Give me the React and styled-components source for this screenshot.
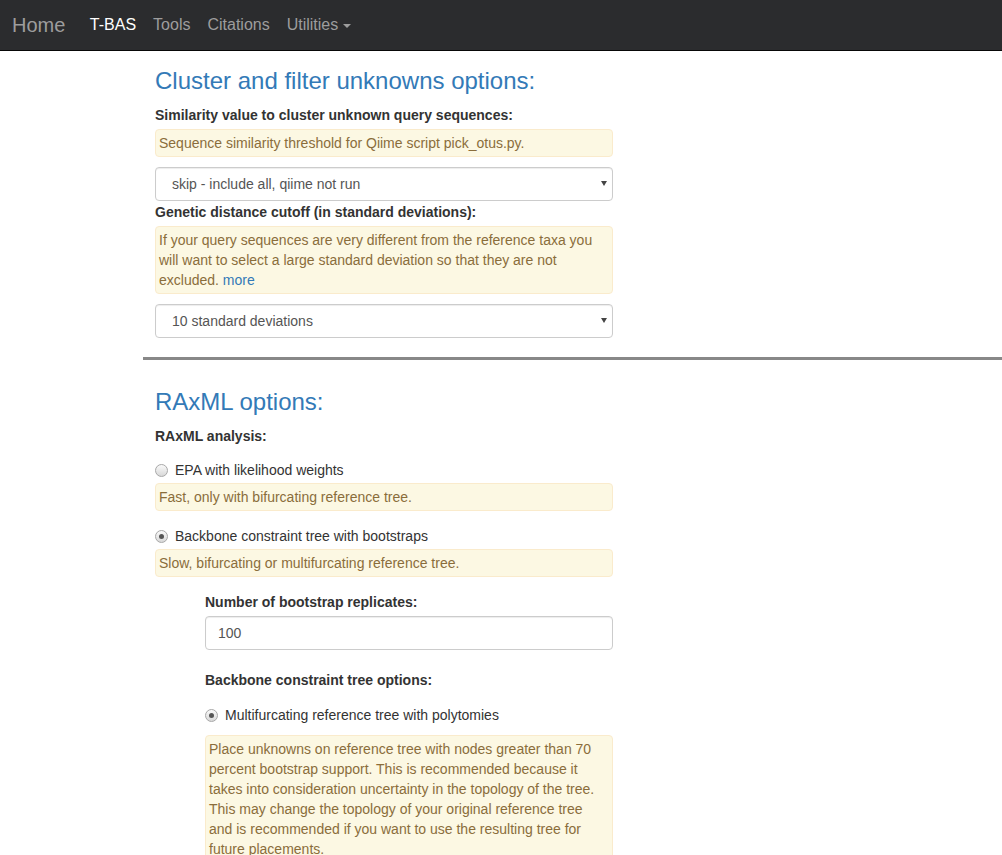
import React from 'react';
import styled, { createGlobalStyle } from 'styled-components';

const GlobalStyle = createGlobalStyle`
  html, body {
    margin: 0;
    padding: 0;
    background: #fff;
  }
  body {
    font-family: "Liberation Sans", Arial, sans-serif;
    font-size: 14px;
    line-height: 20px;
    color: #333;
  }
  * { box-sizing: border-box; }
`;

const Navbar = styled.nav`
  height: 51px;
  background: #2b2c2e;
  border-bottom: 1px solid #080808;
  display: flex;
  align-items: center;
  padding-left: 12px;
`;

const Brand = styled.a`
  font-size: 20px;
  color: #9d9d9d;
  text-decoration: none;
  margin-right: 16px;
  line-height: 50px;
`;

const NavLink = styled.a`
  font-size: 16px;
  line-height: 50px;
  padding: 0 8.5px;
  color: ${p => (p.active ? '#fff' : '#9d9d9d')};
  text-decoration: none;
  display: flex;
  align-items: center;
`;

const Caret = styled.span`
  display: inline-block;
  width: 0;
  height: 0;
  margin-left: 5px;
  margin-top: 2px;
  border-top: 4px solid #9d9d9d;
  border-left: 4px solid transparent;
  border-right: 4px solid transparent;
`;

const Main = styled.main`
  margin-left: 143px;
`;

const Section = styled.section`
  padding-left: 12px;
  width: 470px;
  padding-top: ${p => p.top || 0}px;
`;

const Title = styled.h2`
  font-size: 24px;
  font-weight: 400;
  line-height: 26px;
  color: #337ab7;
  margin: 0 0 11px 0;
`;

const Label = styled.div`
  font-weight: 700;
  margin-top: ${p => p.top || 0}px;
  margin-bottom: ${p => (p.bottom === undefined ? 4 : p.bottom)}px;
`;

const Help = styled.div`
  background: #fcf8e3;
  border: 1px solid #faebcc;
  border-radius: 4px;
  color: #8a6d3b;
  padding: 3px;
  margin-bottom: ${p => p.bottom || 0}px;
  a {
    color: #337ab7;
    text-decoration: none;
  }
`;

const SelectWrap = styled.div`
  position: relative;
  height: 34px;
`;

const Select = styled.select`
  appearance: none;
  -webkit-appearance: none;
  width: 100%;
  height: 34px;
  border: 1px solid #ccc;
  border-radius: 4px;
  background: #fff;
  color: #555;
  font-family: inherit;
  font-size: 14px;
  padding: 0 12px 0 16px;
  box-shadow: inset 0 1px 1px rgba(0, 0, 0, 0.075);
`;

const Arrow = styled.span`
  position: absolute;
  right: 6px;
  top: 14px;
  width: 0;
  height: 0;
  border-top: 5px solid #444;
  border-left: 3px solid transparent;
  border-right: 3px solid transparent;
  pointer-events: none;
`;

const Input = styled.input`
  width: 100%;
  height: 34px;
  border: 1px solid #ccc;
  border-radius: 4px;
  color: #555;
  font-family: inherit;
  font-size: 14px;
  padding: 0 12px;
  box-shadow: inset 0 1px 1px rgba(0, 0, 0, 0.075);
`;

const Rule = styled.hr`
  border: 0;
  height: 3px;
  background: #888;
  margin: 19px 0 29px 0;
`;

const RadioRow = styled.label`
  display: flex;
  align-items: center;
  margin-top: ${p => p.top || 0}px;
  margin-bottom: ${p => p.bottom || 3}px;
  height: 20px;
`;

const Radio = styled.input`
  appearance: none;
  -webkit-appearance: none;
  width: 13px;
  height: 13px;
  margin: 0 7px 0 0;
  border-radius: 50%;
  border: 1px solid #a8a8a8;
  background: linear-gradient(#fafafa, #d8d8d8);
  position: relative;
  &:checked::after {
    content: '';
    position: absolute;
    left: 3px;
    top: 3px;
    width: 5px;
    height: 5px;
    border-radius: 50%;
    background: #555;
  }
`;

const Indent = styled.div`
  padding-left: 50px;
`;

const SelectField = ({ value }) => (
  <SelectWrap>
    <Select defaultValue={value}>
      <option>{value}</option>
    </Select>
    <Arrow />
  </SelectWrap>
);

const App = () => (
  <>
    <GlobalStyle />
    <Navbar>
      <Brand href="#">Home</Brand>
      <NavLink href="#" active>T-BAS</NavLink>
      <NavLink href="#">Tools</NavLink>
      <NavLink href="#">Citations</NavLink>
      <NavLink href="#">Utilities<Caret /></NavLink>
    </Navbar>
    <Main>
      <Section top={17}>
        <Title>Cluster and filter unknowns options:</Title>
        <Label>Similarity value to cluster unknown query sequences:</Label>
        <Help bottom={10}>Sequence similarity threshold for Qiime script pick_otus.py.</Help>
        <SelectField value="skip - include all, qiime not run" />
        <Label top={1}>Genetic distance cutoff (in standard deviations):</Label>
        <Help bottom={10}>
          If your query sequences are very different from the reference taxa you
          will want to select a large standard deviation so that they are not
          excluded. <a href="#">more</a>
        </Help>
        <SelectField value="10 standard deviations" />
      </Section>
      <Rule />
      <Section>
        <Title>RAxML options:</Title>
        <Label bottom={14}>RAxML analysis:</Label>
        <RadioRow top={1}>
          <Radio type="radio" name="raxml" />
          EPA with likelihood weights
        </RadioRow>
        <Help>Fast, only with bifurcating reference tree.</Help>
        <RadioRow top={15}>
          <Radio type="radio" name="raxml" defaultChecked />
          Backbone constraint tree with bootstraps
        </RadioRow>
        <Help>Slow, bifurcating or multifurcating reference tree.</Help>
        <Indent>
          <Label top={15}>Number of bootstrap replicates:</Label>
          <Input defaultValue="100" />
          <Label top={20} bottom={15}>Backbone constraint tree options:</Label>
          <RadioRow bottom={10}>
            <Radio type="radio" name="backbone" defaultChecked />
            Multifurcating reference tree with polytomies
          </RadioRow>
          <Help>
            Place unknowns on reference tree with nodes greater than 70
            percent bootstrap support. This is recommended because it
            takes into consideration uncertainty in the topology of the tree.
            This may change the topology of your original reference tree
            and is recommended if you want to use the resulting tree for
            future placements.
          </Help>
        </Indent>
      </Section>
    </Main>
  </>
);

export default App;
